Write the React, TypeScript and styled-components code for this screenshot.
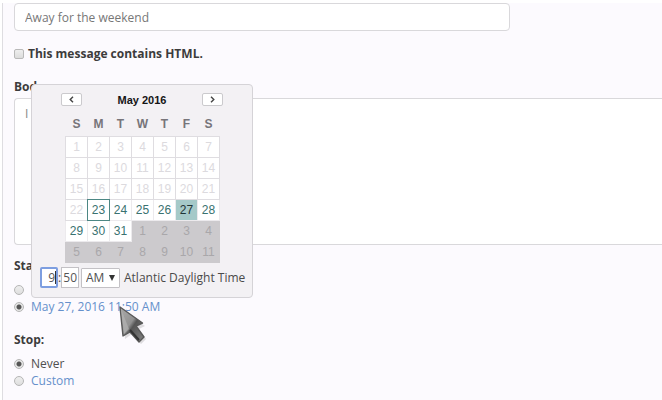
import React, { useState } from "react";
import styled, { createGlobalStyle } from "styled-components";

const GlobalStyle = createGlobalStyle`
  *, *::before, *::after { box-sizing: border-box; }
  body {
    margin: 0;
    background: #fff;
    color: #4a4a4a;
    font: 12px/17px "Open Sans", "Noto Sans", sans-serif;
    overflow: hidden;
  }
  input, select, textarea, button { font: inherit; margin: 0; }
`;

const Panel = styled.main`
  min-height: calc(100vh - 3px);
  margin: 3px 0 0 2px;
  padding-left: 11px;
  border-left: 1px solid #dedde1;
  background: #fcfafe;
`;

const SubjectInput = styled.input`
  display: block;
  width: calc(100% - 152px);
  height: 28px;
  padding: 0 10px;
  border: 1px solid #d9d8db;
  border-radius: 4px;
  background: #fff;
  color: #777;
  outline: none;
`;

const HtmlOption = styled.label`
  display: flex;
  align-items: center;
  gap: 4px;
  margin-top: 14px;
  color: #3c3c3c;
  font-weight: 700;
`;

const Checkbox = styled.input`
  appearance: none;
  width: 10px;
  height: 10px;
  border: 1px solid #b9b9b9;
  border-radius: 2px;
  background: linear-gradient(#eee, #dcdcdc);
  &:checked { background: #666; }
`;

const Heading = styled.label`
  display: block;
  color: #3c3c3c;
  font-weight: 700;
`;

const BodyHeading = styled(Heading)`
  margin: 16px 0 3px;
`;

const BodyText = styled.textarea`
  display: block;
  width: 100%;
  height: 147px;
  padding: 6px 10px;
  border: 1px solid #d9d8db;
  border-right: 0;
  border-radius: 4px 0 0 4px;
  background: #fff;
  color: #888;
  outline: none;
  resize: none;
`;

const Schedule = styled.fieldset<{ $gap: number }>`
  min-width: 0;
  margin: ${(p) => p.$gap}px 0 0;
  padding: 0;
  border: 0;
`;

const Legend = styled.legend`
  padding: 0;
  margin-bottom: 7px;
  color: #3c3c3c;
  font-weight: 700;
`;

const OptionRow = styled.div`
  position: relative;
`;

const Option = styled.label<{ $link?: boolean }>`
  display: flex;
  align-items: center;
  gap: 7px;
  color: ${(p) => (p.$link ? "#6590cb" : "#4f4f4f")};
`;

const Radio = styled.input`
  appearance: none;
  width: 10px;
  height: 10px;
  margin-top: 1px;
  border: 1px solid #b5b5b5;
  border-radius: 50%;
  background: linear-gradient(#eee, #dedede);
  &:checked {
    background: radial-gradient(circle, #555 0 2px, #e6e6e6 3px);
  }
`;

const Picker = styled.section`
  position: absolute;
  z-index: 1;
  bottom: 100%;
  left: 17px;
  width: 222px;
  padding: 8px 8px 9px;
  border: 1px solid #d5d3d7;
  border-radius: 4px;
  background: #f3f1f4;
`;

const MonthBar = styled.header`
  display: flex;
  align-items: center;
  justify-content: space-between;
  padding: 0 21px;
  color: #151515;
  font: 700 11px/14px "Liberation Sans", Arial, sans-serif;
`;

const MonthButton = styled.button`
  display: flex;
  align-items: center;
  justify-content: center;
  width: 21px;
  height: 13px;
  padding: 0;
  border: 1px solid #cbcacd;
  border-radius: 2px;
  background: #fff;
  color: #444;
`;

const Calendar = styled.table`
  width: 155px;
  margin: 6px 0 0 25px;
  border-collapse: collapse;
  table-layout: fixed;
  font: 12px/14px "Liberation Sans", Arial, sans-serif;
  text-align: center;
`;

const Weekday = styled.th`
  height: 24px;
  padding: 0;
  color: #77757a;
`;

type Kind = "past" | "open" | "today" | "selected" | "next";

const dayColours: Record<Kind, [string, string, string]> = {
  past: ["#dcdade", "#fff", "#dfdde1"],
  open: ["#397270", "#fff", "#eceaed"],
  today: ["#397270", "#fff", "#4c8784"],
  selected: ["#1f3536", "#a5c9c8", "#eceaed"],
  next: ["#a9a7aa", "#cccacd", "#cccacd"],
};

const Day = styled.td<{ $kind: Kind }>`
  height: 21px;
  padding: 0;
  border: 1px ${(p) => (p.$kind === "today" ? "double" : "solid")} ${(p) => dayColours[p.$kind][2]};
  background: ${(p) => dayColours[p.$kind][1]};
  color: ${(p) => dayColours[p.$kind][0]};
`;

const TimeRow = styled.div`
  display: flex;
  align-items: center;
  margin-top: 4px;
  white-space: nowrap;
`;

const TimeInput = styled.input<{ $active?: boolean }>`
  width: 18px;
  height: 21px;
  padding: 0 1px 0 0;
  border: ${(p) => (p.$active ? "2px solid #7d9ee0" : "1px solid #c3c1c5")};
  border-radius: ${(p) => (p.$active ? 2 : 0)}px;
  background: #fff;
  color: #555;
  text-align: right;
  outline: none;
`;

const HourField = styled.span`
  display: flex;
  position: relative;
`;

const Caret = styled.span`
  position: absolute;
  top: 4px;
  right: 2px;
  width: 1px;
  height: 13px;
  background: #333;
`;

const Colon = styled.span`
  width: 3px;
  text-align: center;
`;

const PeriodField = styled.span`
  display: flex;
  position: relative;
  margin: 0 4px 0 2px;
`;

const PeriodSelect = styled.select`
  appearance: none;
  width: 39px;
  height: 20px;
  padding: 0 0 0 4px;
  border: 1px solid #c3c1c5;
  border-radius: 1px;
  background: #fff;
  color: #4f4f4f;
  outline: none;
`;

const PeriodArrow = styled.svg`
  position: absolute;
  top: 7px;
  right: 5px;
  pointer-events: none;
`;

const Pointer = styled.svg`
  position: absolute;
  z-index: 2;
  top: 8px;
  left: 105px;
  pointer-events: none;
`;

const weekdays = ["S", "M", "T", "W", "T", "F", "S"];
const weeks = Array.from({ length: 6 }, (_, w) =>
  Array.from({ length: 7 }, (_, d) => w * 7 + d + 1)
);

function kindOf(n: number): Kind {
  if (n > 31) return "next";
  if (n === 27) return "selected";
  if (n === 23) return "today";
  return n < 23 ? "past" : "open";
}

function Chevron({ next }: { next?: boolean }) {
  return (
    <svg width="5" height="7" viewBox="0 0 5 7" fill="none" stroke="currentColor" strokeWidth="1.4" aria-hidden="true">
      <path d={next ? "M1 .7 3.8 3.5 1 6.3" : "M4 .7 1.2 3.5 4 6.3"} />
    </svg>
  );
}

function DatePicker() {
  return (
    <Picker aria-label="Start date">
      <MonthBar>
        <MonthButton type="button" aria-label="Previous month"><Chevron /></MonthButton>
        <span>May 2016</span>
        <MonthButton type="button" aria-label="Next month"><Chevron next /></MonthButton>
      </MonthBar>
      <Calendar>
        <thead>
          <tr>{weekdays.map((d, i) => <Weekday key={i} scope="col">{d}</Weekday>)}</tr>
        </thead>
        <tbody>
          {weeks.map((week) => (
            <tr key={week[0]}>
              {week.map((n) => (
                <Day key={n} $kind={kindOf(n)}>{n > 31 ? n - 31 : n}</Day>
              ))}
            </tr>
          ))}
        </tbody>
      </Calendar>
      <TimeRow>
        <HourField>
          <TimeInput $active aria-label="Hour" defaultValue="9" />
          <Caret />
        </HourField>
        <Colon>:</Colon>
        <TimeInput aria-label="Minute" defaultValue="50" />
        <PeriodField>
          <PeriodSelect aria-label="AM or PM" defaultValue="AM">
            <option>AM</option>
            <option>PM</option>
          </PeriodSelect>
          <PeriodArrow width="6" height="6" viewBox="0 0 6 6" aria-hidden="true">
            <path d="M0 0h6L3 6z" fill="#333" />
          </PeriodArrow>
        </PeriodField>
        <span>Atlantic Daylight Time</span>
      </TimeRow>
    </Picker>
  );
}

export default function App() {
  const [start, setStart] = useState("date");
  const [stop, setStop] = useState("never");
  return (
    <>
      <GlobalStyle />
      <Panel>
        <SubjectInput aria-label="Subject" defaultValue="Away for the weekend" />
        <HtmlOption>
          <Checkbox type="checkbox" />
          This message contains HTML.
        </HtmlOption>
        <BodyHeading htmlFor="body">Body:</BodyHeading>
        <BodyText id="body" defaultValue="I" />
        <Schedule $gap={12}>
          <Legend>Start:</Legend>
          <Option>
            <Radio type="radio" name="start" checked={start === "now"} onChange={() => setStart("now")} />
            Now
          </Option>
          <OptionRow>
            <Option $link>
              <Radio type="radio" name="start" checked={start === "date"} onChange={() => setStart("date")} />
              May 27, 2016 11:50 AM
            </Option>
            <DatePicker />
            <Pointer width="30" height="38" viewBox="0 0 30 38" aria-hidden="true">
              <defs>
                <linearGradient id="metal" x1="0" y1="0" x2="1" y2="1">
                  <stop offset="0" stopColor="#aaa" />
                  <stop offset=".45" stopColor="#929292" />
                  <stop offset=".55" stopColor="#555" />
                  <stop offset="1" stopColor="#858585" />
                </linearGradient>
              </defs>
              <path d="M3 4 26 20 20 23 27 33 22 38 13 28 6 33z" fill="#999" opacity=".3" />
              <path d="M1 1 23.500 17 17 20 25 31 20 36 11 26 4 30z" fill="url(#metal)" stroke="#585858" strokeWidth="1.4" strokeLinejoin="round" />
              <path d="M2 3 10 23 5 28z" fill="#b3b3b3" opacity=".7" />
              <path d="M11 24 20 34" fill="none" stroke="#333" strokeWidth="2" />
            </Pointer>
          </OptionRow>
        </Schedule>
        <Schedule $gap={16}>
          <Legend>Stop:</Legend>
          <Option>
            <Radio type="radio" name="stop" checked={stop === "never"} onChange={() => setStop("never")} />
            Never
          </Option>
          <Option $link>
            <Radio type="radio" name="stop" checked={stop === "custom"} onChange={() => setStop("custom")} />
            Custom
          </Option>
        </Schedule>
      </Panel>
    </>
  );
}
